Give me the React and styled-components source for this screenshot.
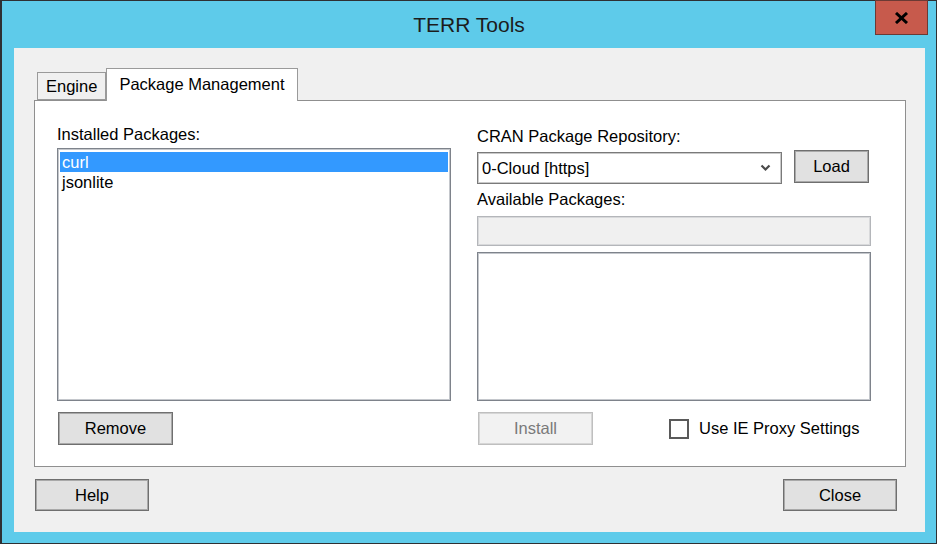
import styled, { createGlobalStyle } from "styled-components";

const GlobalStyle = createGlobalStyle`
  body {
    margin: 0;
    background: #ffffff;
    font-family: "Liberation Sans", Arial, sans-serif;
  }
`;

const installed = ["curl", "jsonlite"];

const App = () => {
  return (
    <>
      <GlobalStyle />
      <Window>
        <TitleBar>
          <span />
          <Title>TERR Tools</Title>
          <CloseBox>
            <svg width="15" height="12" viewBox="0 0 15 12">
              <path d="M2 1 L13 11 M13 1 L2 11" stroke="#000" strokeWidth="3" />
            </svg>
          </CloseBox>
        </TitleBar>
        <Client>
          <TabStrip>
            <Tab>Engine</Tab>
            <Tab active>Package Management</Tab>
          </TabStrip>
          <Panel>
            <Column>
              <Label>Installed Packages:</Label>
              <ListBox height={253}>
                {installed.map((name, i) => (
                  <ListItem key={name} selected={i === 0}>
                    {name}
                  </ListItem>
                ))}
              </ListBox>
              <ButtonRow>
                <Button>Remove</Button>
              </ButtonRow>
            </Column>
            <Column>
              <Label offset={2}>CRAN Package Repository:</Label>
              <ComboRow>
                <Combo>
                  <span>0-Cloud [https]</span>
                  <svg width="11" height="8" viewBox="0 0 11 8">
                    <path d="M1.5 1.5 L5.5 5.5 L9.5 1.5" fill="none" stroke="#4a4a4a" strokeWidth="2.2" />
                  </svg>
                </Combo>
                <Button narrow>Load</Button>
              </ComboRow>
              <Label offset={5}>Available Packages:</Label>
              <Field />
              <ListBox height={149} />
              <ButtonRow>
                <Button disabled>Install</Button>
                <CheckLabel>
                  <CheckBox />
                  Use IE Proxy Settings
                </CheckLabel>
              </ButtonRow>
            </Column>
          </Panel>
          <Footer>
            <Button>Help</Button>
            <Button>Close</Button>
          </Footer>
        </Client>
      </Window>
    </>
  );
};

const Window = styled.div`
  width: 934px;
  height: 542px;
  background: #5ecbea;
  border: 1px solid #2e3033;
  border-left-width: 2px;
  display: flex;
  flex-direction: column;
`;

const TitleBar = styled.div`
  height: 47px;
  display: grid;
  grid-template-columns: 1fr auto 1fr;
  align-items: center;
`;

const Title = styled.div`
  font-size: 21px;
  color: #1c1c1c;
  margin-top: 1px;
`;

const CloseBox = styled.div`
  justify-self: end;
  align-self: start;
  margin-top: -1px;
  margin-right: 8px;
  width: 51px;
  height: 33px;
  background: #c75a4c;
  border: 1px solid #6b3a34;
  display: flex;
  align-items: center;
  justify-content: center;
`;

const Client = styled.div`
  margin: 0 11px 0 12px;
  height: 484px;
  box-sizing: border-box;
  background: #f0f0f0;
  padding: 20px 19px 0 20px;
  font-size: 16.5px;
  color: #000;
`;

const TabStrip = styled.div`
  height: 32px;
  display: flex;
  align-items: flex-end;
  padding-left: 3px;
`;

const Tab = styled.div`
  position: relative;
  z-index: ${(p) => (p.active ? 1 : 0)};
  box-sizing: border-box;
  height: ${(p) => (p.active ? "33px" : "28px")};
  margin-bottom: ${(p) => (p.active ? "-1px" : "0")};
  padding: 0 ${(p) => (p.active ? "12px" : "8px")};
  display: flex;
  align-items: center;
  background: ${(p) => (p.active ? "#ffffff" : "#f0f0f0")};
  border: 1px solid #9a9a9a;
  border-bottom: ${(p) => (p.active ? "none" : "1px solid #9a9a9a")};
  font-size: 16.5px;
  padding-bottom: ${(p) => (p.active ? "2px" : "0")};
`;

const Panel = styled.div`
  box-sizing: border-box;
  width: 872px;
  height: 367px;
  background: #ffffff;
  border: 1px solid #8f8f8f;
  padding: 23px 0 0 22px;
  display: grid;
  grid-template-columns: 394px 394px;
  column-gap: 26px;
  align-items: start;
`;

const Column = styled.div`
  display: flex;
  flex-direction: column;
`;

const Label = styled.div`
  height: 20px;
  line-height: 20px;
  margin-top: ${(p) => p.offset || 0}px;
  margin-bottom: 4px;
  white-space: nowrap;
`;

const ListBox = styled.div`
  box-sizing: border-box;
  height: ${(p) => p.height}px;
  background: #ffffff;
  border: 1px solid #7e838b;
  box-shadow: inset 0 0 0 1px #c4c7cc;
  padding: 3px 2px;
`;

const ListItem = styled.div`
  height: 20px;
  line-height: 20px;
  padding-left: 2px;
  background: ${(p) => (p.selected ? "#3399ff" : "transparent")};
  color: ${(p) => (p.selected ? "#ffffff" : "#000000")};
`;

const ButtonRow = styled.div`
  margin-top: 11px;
  display: flex;
  align-items: center;
  padding-left: 1px;
`;

const Button = styled.div`
  box-sizing: border-box;
  width: ${(p) => (p.narrow ? "75px" : "115px")};
  height: 33px;
  display: flex;
  align-items: center;
  justify-content: center;
  background: ${(p) => (p.disabled ? "#f2f2f2" : "#e1e1e1")};
  border: 1px solid ${(p) => (p.disabled ? "#bfbfbf" : "#6f6f6f")};
  box-shadow: inset 0 0 0 1px ${(p) => (p.disabled ? "#d6d6d6" : "#a9a9a9")};
  color: ${(p) => (p.disabled ? "#7a7a7a" : "#000000")};
`;

const ComboRow = styled.div`
  display: flex;
  align-items: flex-start;
  gap: 12px;
  margin-top: 2px;
  & > ${Button} {
    margin-top: -2px;
  }
`;

const Combo = styled.div`
  box-sizing: border-box;
  width: 305px;
  height: 32px;
  background: #ffffff;
  border: 1px solid #7a7a7a;
  box-shadow: inset 0 0 0 1px #c9c9c9;
  display: flex;
  align-items: center;
  justify-content: space-between;
  padding: 0 10px 0 4px;
`;

const Field = styled.div`
  box-sizing: border-box;
  height: 30px;
  margin: 3px 0 6px;
  background: #f0f0f0;
  border: 1px solid #b4b6ba;
  box-shadow: inset 0 0 0 1px #d8d9db;
`;

const CheckLabel = styled.label`
  display: flex;
  align-items: center;
  gap: 10px;
  margin-left: 76px;
  white-space: nowrap;
`;

const CheckBox = styled.span`
  box-sizing: border-box;
  width: 20px;
  height: 20px;
  background: #ffffff;
  border: 2px solid #5a5a5a;
`;

const Footer = styled.div`
  margin-top: 12px;
  width: 872px;
  box-sizing: border-box;
  padding: 0 9px 0 1px;
  display: flex;
  justify-content: space-between;
  & > ${Button} {
    height: 32px;
    width: 114px;
  }
`;

export default App;
